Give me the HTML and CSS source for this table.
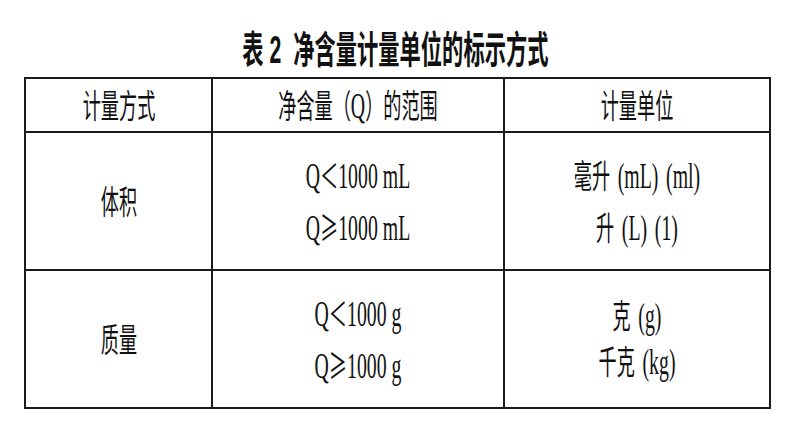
FILE: index.html
```html
<!DOCTYPE html>
<html lang="zh">
<head>
<meta charset="utf-8">
<title>表 2 净含量计量单位的标示方式</title>
<link rel="stylesheet" href="styles.css">
</head>
<body>
<h1 class="title"><span class="sx">表 2&nbsp; 净含量计量单位的标示方式</span></h1>
<table class="units">
  <colgroup>
    <col class="c1">
    <col class="c2">
    <col class="c3">
  </colgroup>
  <thead>
    <tr class="head">
      <th><span class="sx"><span class="cjk">计量方式</span></span></th>
      <th><span class="sx"><span class="cjk">净含量（</span>Q<span class="cjk">）的范围</span></span></th>
      <th><span class="sx"><span class="cjk">计量单位</span></span></th>
    </tr>
  </thead>
  <tbody>
    <tr class="row">
      <td><span class="sx"><span class="cjk">体积</span></span></td>
      <td>
        <span class="sx lines">
          <span class="ln">Q<span class="cjk">＜</span>1000 mL</span>
          <span class="ln">Q<span class="cjk">≥</span>1000 mL</span>
        </span>
      </td>
      <td>
        <span class="sx lines units-col">
          <span class="ln"><span class="cjk">毫升</span> (mL) (ml)</span>
          <span class="ln"><span class="cjk">升</span> (L) (1)</span>
        </span>
      </td>
    </tr>
    <tr class="row">
      <td><span class="sx"><span class="cjk">质量</span></span></td>
      <td>
        <span class="sx lines">
          <span class="ln">Q<span class="cjk">＜</span>1000 g</span>
          <span class="ln">Q<span class="cjk">≥</span>1000 g</span>
        </span>
      </td>
      <td>
        <span class="sx lines units-col tight">
          <span class="ln"><span class="cjk">克</span> (g)</span>
          <span class="ln"><span class="cjk">千克</span> (kg)</span>
        </span>
      </td>
    </tr>
  </tbody>
</table>
</body>
</html>
```

FILE: styles.css
```css
html, body {
  margin: 0;
  padding: 0;
  background: #ffffff;
  color: #111111;
}

body {
  width: 790px;
  height: 444px;
  overflow: hidden;
  font-family: "Liberation Serif", "Noto Sans CJK SC", serif;
}

.sx {
  display: inline-block;
  transform: scaleX(0.55);
  transform-origin: center center;
  white-space: nowrap;
}

.title {
  margin: 0;
  padding-top: 23px;
  height: 54px;
  display: flex;
  align-items: center;
  justify-content: center;
  font-family: "Liberation Sans", "Noto Sans CJK SC", sans-serif;
  font-weight: bold;
  font-size: 38px;
  line-height: 54px;
  color: #111111;
}

.title .sx {
  transform: scaleX(0.56);
}

.units {
  border-collapse: collapse;
  width: 747px;
  margin-left: 24px;
  font-size: 36px;
}

.units .c1 { width: 187px; }
.units .c2 { width: 289px; }

.units th,
.units td {
  border: 2px solid #1c1c1c;
  padding: 0;
  text-align: center;
  vertical-align: middle;
  font-weight: normal;
  line-height: 50px;
}

.units .head {
  height: 52px;
}

.units .row {
  height: 138px;
}

.cjk {
  font-family: "Noto Sans CJK SC", sans-serif;
  font-size: 33px;
}

.lines .ln {
  display: block;
  line-height: 50px;
}

.units-col {
  word-spacing: 5px;
}

.lines.tight .ln {
  line-height: 44px;
}
```
